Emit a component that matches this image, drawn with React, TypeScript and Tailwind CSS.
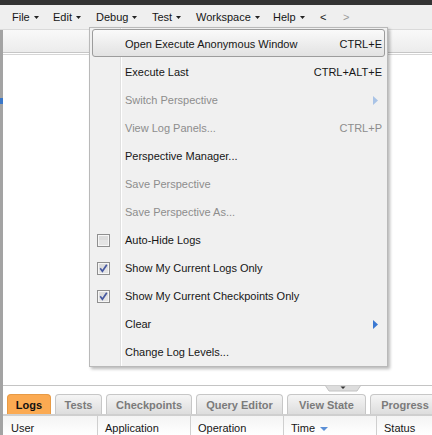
import React from 'react';

type MenuItem = {
  label: string;
  shortcut?: string;
  disabled?: boolean;
  sub?: boolean;
  check?: 'on' | 'off';
  active?: boolean;
};

const items: MenuItem[] = [
  { label: 'Open Execute Anonymous Window', shortcut: 'CTRL+E', active: true },
  { label: 'Execute Last', shortcut: 'CTRL+ALT+E' },
  { label: 'Switch Perspective', disabled: true, sub: true },
  { label: 'View Log Panels...', shortcut: 'CTRL+P', disabled: true },
  { label: 'Perspective Manager...' },
  { label: 'Save Perspective', disabled: true },
  { label: 'Save Perspective As...', disabled: true },
  { label: 'Auto-Hide Logs', check: 'off' },
  { label: 'Show My Current Logs Only', check: 'on' },
  { label: 'Show My Current Checkpoints Only', check: 'on' },
  { label: 'Clear', sub: true },
  { label: 'Change Log Levels...' },
];

const topMenus = [
  { label: 'File', w: 'w-[41px]' },
  { label: 'Edit', w: 'w-[43px]' },
  { label: 'Debug', w: 'w-[56px]' },
  { label: 'Test', w: 'w-[44px]' },
  { label: 'Workspace', w: 'w-[77px]' },
  { label: 'Help', w: 'w-[47px]' },
];

const tabs = [
  { label: 'Logs', w: 'w-[44px]', active: true },
  { label: 'Tests', w: 'w-[47px]' },
  { label: 'Checkpoints', w: 'w-[86px]' },
  { label: 'Query Editor', w: 'w-[87px]' },
  { label: 'View State', w: 'w-[79px]' },
  { label: 'Progress', w: 'w-[70px]' },
];

const Caret = () => (
  <svg width="5" height="3" viewBox="0 0 5 3" className="ml-[4px] mt-[1px]">
    <path d="M0 0h5L2.5 3z" fill="#222" />
  </svg>
);

const Checkbox = ({ checked }: { checked: boolean }) => (
  <svg width="13" height="13" viewBox="0 0 13 13">
    <rect x="0.5" y="0.5" width="12" height="12" fill="#f6f6f6" stroke="#8f8f8f" />
    <rect x="2" y="2" width="9" height="9" fill="#e4e4e4" />
    <rect x="2" y="2" width="9" height="4" fill="#dcdcdc" />
    {checked && <path d="M3.2 6.2 5.4 9.2 9.8 2.8" stroke="#4658a0" strokeWidth="1.7" fill="none" />}
  </svg>
);

const SubArrow = ({ disabled }: { disabled?: boolean }) => (
  <svg width="5" height="9" viewBox="0 0 5 9">
    <path d="M0 0 5 4.5 0 9z" fill={disabled ? '#a9c3e6' : '#3a78d2'} />
  </svg>
);

const DropMenu = () => (
  <div className="absolute left-[89px] top-[27px] w-[299px] border border-[#b9b9b9] bg-[#f0f0f0] py-[1px] shadow-[2px_2px_3px_rgba(0,0,0,0.28)]">
    <div className="absolute left-[30px] top-0 bottom-0 w-[2px] border-l border-[#e0e0e0] bg-white" />
    {items.map((it) => (
      <div
        key={it.label}
        className={`relative mx-[2px] flex h-[28px] items-center rounded-[3px] border pt-[2px] text-[11px] ${
          it.active
            ? 'border-[#9c9c9c] bg-gradient-to-b from-[#fafafa] to-[#e2e2e2]'
            : 'border-transparent'
        } ${it.disabled ? 'text-[#8d8d8d]' : 'text-[#161616]'}`}
      >
        <div className="flex w-[32px] shrink-0 justify-start pl-[4px]">
          {it.check && <Checkbox checked={it.check === 'on'} />}
        </div>
        <span className="flex-1 whitespace-nowrap">{it.label}</span>
        {it.shortcut && <span className="pr-[2px]">{it.shortcut}</span>}
        {it.sub && (
          <span className="pr-[6px]">
            <SubArrow disabled={it.disabled} />
          </span>
        )}
      </div>
    ))}
  </div>
);

const App: React.FC = () => {
  return (
    <div className="relative flex h-[435px] w-[432px] flex-col overflow-hidden bg-white font-['Liberation_Sans',Arial,sans-serif] text-[#161616]">
      <div className="h-[5px] bg-[#333333]" />
      <div className="flex h-[24px] items-center bg-[#efefef] pl-[12px] text-[11px]">
        {topMenus.map((m) => (
          <div key={m.label} className={`flex items-center ${m.w}`}>
            <span>{m.label}</span>
            <Caret />
          </div>
        ))}
        <span className="w-[23px]">&lt;</span>
        <span className="text-[#9a9a9a]">&gt;</span>
      </div>
      <div className="h-[1px] bg-[#dadada]" />
      <div className="flex flex-1">
        <div className="flex w-[3px] shrink-0 flex-col">
          <div className="h-[68px] bg-[#a3a3a3]" />
          <div className="h-[6px] bg-[#3b78c8]" />
          <div className="flex-1 bg-[#a3a3a3]" />
        </div>
        <div className="flex min-w-0 flex-1 flex-col">
          <div className="h-[22px] bg-gradient-to-b from-[#f9f9f9] to-[#ececec]" />
          <div className="h-[1px] bg-[#c6c6c6]" />
          <div className="h-[1px] bg-white" />
          <div className="h-[1px] bg-[#d6d6d6]" />
          <div className="flex-1 bg-white" />
          <div className="relative h-[1px] bg-[#c4c4c4]">
            <svg width="36" height="7" viewBox="0 0 36 7" className="absolute left-[322px] top-0">
              <path d="M0 0H36L32 6H4Z" fill="#dddddd" stroke="#c2c2c2" strokeWidth="1" />
              <path d="M15.5 1.5H20.5L18 4Z" fill="#333" />
            </svg>
          </div>
          <div className="h-[8px] bg-white" />
          <div className="flex h-[20px] items-end gap-[4px] overflow-hidden pl-[4px]">
            {tabs.map((t) => (
              <div
                key={t.label}
                className={`flex h-[20px] shrink-0 items-center justify-center rounded-t-[4px] border border-b-0 pt-[1px] text-[11px] font-bold ${t.w} ${
                  t.active
                    ? 'border-[#e79a45] bg-[#fbaa52] text-[#111111]'
                    : 'border-[#c7c7c7] bg-gradient-to-b from-[#f5f5f5] to-[#dddddd] text-[#7b7b7b]'
                }`}
              >
                {t.label}
              </div>
            ))}
          </div>
          <div className="h-[2px] bg-[#cfcfcf]" />
          <div className="flex h-[19px] bg-gradient-to-b from-[#f4f4f4] to-white text-[11px] text-[#161616]">
            <div className="flex w-[94px] items-center pl-[8px] pt-[5px]">User</div>
            <div className="flex w-[93px] items-center border-l border-[#cfcfcf] pl-[7px] pt-[5px]">Application</div>
            <div className="flex w-[93px] items-center border-l border-[#cfcfcf] pl-[7px] pt-[5px]">Operation</div>
            <div className="flex w-[93px] items-center border-l border-[#cfcfcf] pl-[7px] pt-[5px]">
              Time
              <svg width="8" height="4" viewBox="0 0 8 4" className="ml-[5px] mt-[2px]">
                <path d="M0 0h8L4 4z" fill="#5b8fd6" />
              </svg>
            </div>
            <div className="flex flex-1 items-center border-l border-[#cfcfcf] pl-[7px] pt-[5px]">Status</div>
          </div>
        </div>
      </div>
      <DropMenu />
    </div>
  );
};

export default App;
